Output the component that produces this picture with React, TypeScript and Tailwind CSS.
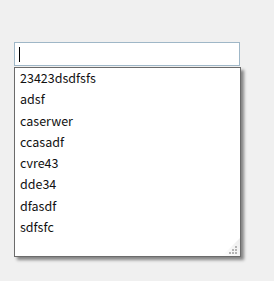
const items = [
  "23423dsdfsfs",
  "adsf",
  "caserwer",
  "ccasadf",
  "cvre43",
  "dde34",
  "dfasdf",
  "sdfsfc",
];

function Grip() {
  const dots = [
    [9, 1],
    [9, 4],
    [6, 4],
    [9, 7],
    [6, 7],
    [3, 7],
  ];
  return (
    <svg width="20" height="18" viewBox="0 0 20 18" className="absolute bottom-0 right-0">
      <defs>
        <linearGradient id="g" x1="0" y1="1" x2="1" y2="0">
          <stop offset="0" stopColor="#ffffff" />
          <stop offset="1" stopColor="#ececec" />
        </linearGradient>
      </defs>
      <polygon points="20,0 20,18 2,18" fill="url(#g)" />
      {dots.map(([x, y], i) => (
        <rect key={i} x={x + 6} y={y + 7} width="2" height="2" fill="#b4b4b4" />
      ))}
    </svg>
  );
}

export default function App() {
  return (
    <div className="w-[274px] h-[281px] bg-[#f0f0f0] pt-[42px] pl-[14px] font-['Microsoft_YaHei','Noto_Sans_CJK_SC',sans-serif] text-[12.5px] text-[#111]">
      <div className="w-[226px] h-[24px] bg-white border border-[#9fb7c7] flex items-center pl-[4px]">
        <div className="w-px h-[15px] bg-black" />
      </div>
      <div className="relative mt-px w-[227px] h-[190px] bg-white border border-[#6b6b6b] shadow-[3px_3px_3px_rgba(0,0,0,0.45)]">
        {items.map((t) => (
          <div key={t} className="h-[21.3px] leading-[19px] pl-[5px]">
            {t}
          </div>
        ))}
        <Grip />
      </div>
    </div>
  );
}
